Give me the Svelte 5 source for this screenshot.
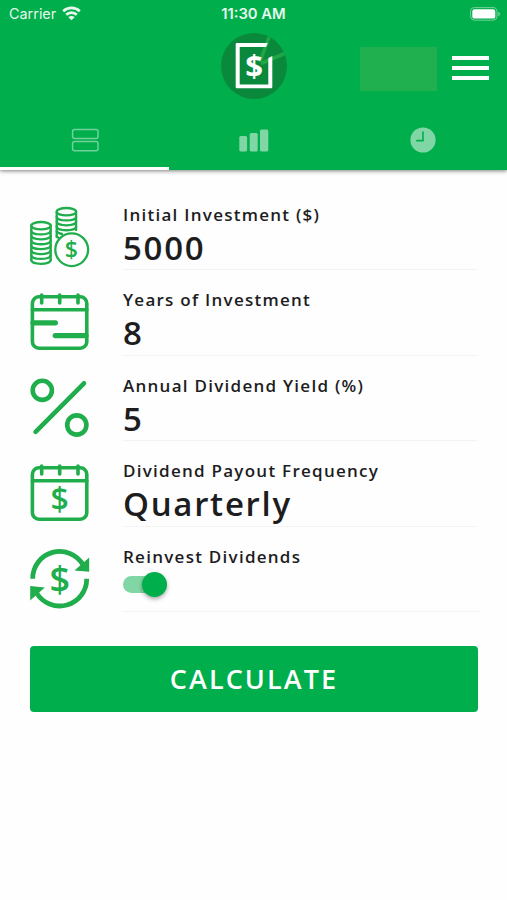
<script lang="ts">
	type Field = {
		icon: 'coins' | 'schedule' | 'percent' | 'payout' | 'reinvest';
		label: string;
		value?: string;
	};

	const fields: Field[] = [
		{ icon: 'coins', label: 'Initial Investment ($)', value: '5000' },
		{ icon: 'schedule', label: 'Years of Investment', value: '8' },
		{ icon: 'percent', label: 'Annual Dividend Yield (%)', value: '5' },
		{ icon: 'payout', label: 'Dividend Payout Frequency', value: 'Quarterly' },
		{ icon: 'reinvest', label: 'Reinvest Dividends' }
	];

	const tabs = ['form', 'chart', 'history'];

	let activeTab = $state('form');
	let reinvest = $state(true);
</script>

{#snippet calendar()}
	<rect x="2.4" y="4.8" width="54.4" height="51.4" rx="6.5" />
	<path d="M2.4 17.8H56.8M11.7 3v8M29.7 3v8M48 3v8" />
{/snippet}

<div class="screen">
	<header>
		<div class="status">
			<div class="carrier">
				<span>Carrier</span>
				<svg viewBox="0 0 19 15" width="19" height="15" aria-hidden="true">
					<g fill="none" stroke="#fff" stroke-width="2.7">
						<path d="M1.2 5.3a12 12 0 0 1 16.6 0" />
						<path d="M4.2 8.8a7.6 7.6 0 0 1 10.6 0" />
					</g>
					<path d="M9.5 14.3L6.3 11.2a4.6 4.6 0 0 1 6.4 0z" fill="#fff" />
				</svg>
			</div>
			<span class="time">11:30 AM</span>
			<svg class="battery" viewBox="0 0 31 14" width="31" height="14" aria-hidden="true">
				<rect x="0.6" y="0.6" width="26.4" height="12.6" rx="4" fill="none" stroke="#fff" stroke-opacity="0.45" />
				<rect x="2.3" y="2.2" width="23" height="9.4" rx="2.2" fill="#fff" />
				<path d="M28.4 4.8c2 .8 2 3.6 0 4.4z" fill="#fff" fill-opacity="0.55" />
			</svg>
		</div>

		<div class="brand">
			<svg class="logo" viewBox="0 0 66 66" width="66" height="66" aria-hidden="true">
				<circle cx="33" cy="33" r="33" fill="#0a893c" />
				<path d="M39 29L48 4M40 30.5L63.5 20.5" stroke="#20a646" stroke-width="3.6" fill="none" />
				<path
					d="M46.8 10H15.7a1 1 0 0 0-1 1V54.3a1 1 0 0 0 1 1H50.3a1 1 0 0 0 1-1V23L47.3 25V51.4H18.7V14H45z"
					fill="#fff"
				/>
				<text x="33" y="43.8" font-size="31" font-weight="700" text-anchor="middle" fill="#fff">$</text>
			</svg>
			<div class="actions">
				<div class="slot"></div>
				<button class="menu" aria-label="Menu">
					<i></i>
					<i></i>
					<i></i>
				</button>
			</div>
		</div>

		<nav>
			{#each tabs as tab (tab)}
				<button class="tab" class:active={activeTab === tab} onclick={() => (activeTab = tab)} aria-label={tab}>
					<svg viewBox="0 0 30 26" width="30" height="26" aria-hidden="true">
						{#if tab === 'form'}
							<g fill="none" stroke="#70d29a" stroke-width="1.5">
								<rect x="2.6" y="2.4" width="25.4" height="9.2" rx="2" />
								<rect x="2.6" y="14.4" width="25.4" height="9.4" rx="2" />
							</g>
						{:else if tab === 'chart'}
							<g fill="#80d7a5">
								<rect x="0.3" y="9" width="7.8" height="15.5" rx="1.6" />
								<rect x="10.7" y="6" width="8" height="18.5" rx="1.6" />
								<rect x="21" y="2.5" width="8.3" height="22" rx="1.6" />
							</g>
						{:else}
							<circle cx="15" cy="13" r="12.6" fill="#80d7a5" />
							<path d="M15 4.6V13.6H8.2" fill="none" stroke="#00ae4b" stroke-width="1.6" />
						{/if}
					</svg>
				</button>
			{/each}
		</nav>
	</header>

	<main>
		{#each fields as field (field.icon)}
			<div class="row">
				<svg class="icon" viewBox="0 0 60 60" width="60" height="60" aria-hidden="true">
					{#if field.icon === 'coins'}
						<g stroke-width="2.3">
							<ellipse cx="11" cy="18.7" rx="9.7" ry="3.7" />
							<path d="M1.3 18.7V53.2M20.7 18.7V53.2" />
							{#each [23.7, 28.6, 33.5, 38.4, 43.3, 48.2, 53.1] as y}
								<path d="M1.3 {y}c0 5 19.4 5 19.4 0" />
							{/each}
							<ellipse cx="36.4" cy="4.7" rx="9.7" ry="3.7" />
							<path d="M26.7 4.7V30M46.1 4.7V23" />
							<path d="M26.7 9.7c0 5 19.4 5 19.4 0M26.7 14.6c0 5 19.4 5 19.4 0M26.7 19.5c0 5 19.4 5 19.4 0" />
							<path d="M26.7 24.4c1 1.6 3 2.3 5.4 2.6M26.7 29.5l2 1.4" />
							<circle cx="41.7" cy="42.7" r="16.4" />
						</g>
						<text x="41.4" y="50.6" font-size="23" font-weight="600">$</text>
					{:else if field.icon === 'schedule'}
						<g stroke-width="3.6">
							{@render calendar()}
							<path d="M3 30.8H25.4M25.2 43.6H56" stroke-width="5.2" />
						</g>
					{:else if field.icon === 'percent'}
						<g stroke-width="4.6">
							<circle cx="12.3" cy="12.3" r="9.6" />
							<circle cx="46.8" cy="47" r="9.6" />
							<path d="M5.6 53.8L54 5.3" />
						</g>
					{:else if field.icon === 'payout'}
						<g stroke-width="3.6">
							{@render calendar()}
						</g>
						<text x="29.7" y="48.4" font-size="32" font-weight="600">$</text>
					{:else}
						<g stroke-width="4.8" class="butt">
							<path d="M2.7 29.7A27 27 0 0 1 53 15.8" />
							<path d="M56.7 29.7A27 27 0 0 1 6.4 43.6" />
						</g>
						<path class="head" d="M59.2 8.6V22.8L44.5 21.4zM0.2 51.5V37L14.8 38.4z" />
						<text x="29.7" y="42.6" font-size="36" font-weight="600">$</text>
					{/if}
				</svg>
				<div class="field" class:wide={!field.value}>
					<span class="label">{field.label}</span>
					{#if field.value}
						<span class="value">{field.value}</span>
					{:else}
						<button
							class="switch"
							class:on={reinvest}
							role="switch"
							aria-checked={reinvest}
							aria-label={field.label}
							onclick={() => (reinvest = !reinvest)}
						>
							<i></i>
						</button>
					{/if}
				</div>
			</div>
		{/each}

		<button class="calculate">CALCULATE</button>
	</main>
</div>

<style>
	:global(body) {
		background: #fefefe;
	}

	.screen {
		width: 507px;
		height: 900px;
		overflow: hidden;
		background: #fefefe;
		color: #1d1d1f;
		font-family: 'Open Sans', 'Noto Sans', sans-serif;
	}

	button {
		padding: 0;
		border: 0;
		background: none;
		font: inherit;
		cursor: pointer;
	}

	header {
		display: flex;
		flex-direction: column;
		height: 169.5px;
		background: #00ae4b;
		box-shadow: 0 1px 4px rgba(0, 0, 0, 0.5);
	}

	.status {
		display: grid;
		grid-template-columns: 1fr auto 1fr;
		align-items: center;
		height: 27px;
		padding: 0 6px 0 9px;
		color: #fff;
		font-family: Inter, Roboto, sans-serif;
		font-size: 14.4px;
	}
	.carrier {
		display: flex;
		align-items: center;
		gap: 6px;
		opacity: 0.9;
	}
	.time {
		margin-right: 3px;
		font-size: 14.8px;
		font-weight: 600;
		opacity: 0.9;
	}
	.battery {
		justify-self: end;
	}

	.brand {
		display: grid;
		grid-template-columns: 1fr 66px 1fr;
		align-items: center;
		height: 84px;
		padding: 0 18px 0 19px;
	}
	.logo {
		grid-column: 2;
		margin-top: -6px;
	}
	.actions {
		display: flex;
		align-items: center;
		justify-content: flex-end;
		gap: 15px;
	}
	.slot {
		width: 77px;
		height: 44px;
		background: #20b04f;
	}
	.menu {
		display: flex;
		flex-direction: column;
		gap: 6px;
		width: 37px;
		margin-top: -2px;
	}
	.menu i {
		height: 4px;
		background: #fff;
	}

	nav {
		display: grid;
		grid-template-columns: repeat(3, 1fr);
		flex: 1;
	}
	.tab {
		display: flex;
		align-items: center;
		justify-content: center;
		padding-top: 3px;
		border-bottom: 3px solid transparent;
	}
	.tab.active {
		border-bottom-color: #fff;
	}

	main {
		padding: 15px 30px 0;
	}

	.row {
		display: flex;
		gap: 33px;
		height: 85.5px;
	}
	.icon {
		flex: none;
		margin-top: 22px;
		overflow: visible;
		fill: none;
		stroke: #20ad4b;
		stroke-linecap: round;
		stroke-linejoin: round;
	}
	.icon text {
		fill: #20ad4b;
		stroke: none;
		text-anchor: middle;
	}
	.butt {
		stroke-linecap: butt;
	}
	.head {
		fill: #20ad4b;
		stroke: none;
	}

	.field {
		display: flex;
		flex-direction: column;
		align-items: flex-start;
		flex: 1;
		padding-top: 18px;
		border-bottom: 1px solid #f3f3f3;
	}
	.field.wide {
		margin-right: -3px;
	}
	.label {
		font-size: 17px;
		font-weight: 600;
		line-height: 23px;
		letter-spacing: 1.26px;
		white-space: nowrap;
	}
	.value {
		font-size: 33px;
		font-weight: 600;
		line-height: 44px;
		letter-spacing: 1.7px;
	}

	.switch {
		display: flex;
		align-items: center;
		width: 44px;
		height: 17px;
		margin-top: 8px;
		border-radius: 9px;
		background: linear-gradient(90deg, #c4c4c4 0 36px, transparent 36px);
	}
	.switch i {
		width: 25px;
		height: 25px;
		border-radius: 50%;
		background: #f4f4f4;
		box-shadow: 0 2px 4px rgba(0, 0, 0, 0.35);
	}
	.switch.on {
		justify-content: flex-end;
		background: linear-gradient(90deg, #80d7a5 0 36px, transparent 36px);
	}
	.switch.on i {
		background: #00ae4b;
	}

	.calculate {
		width: 448px;
		height: 66px;
		margin-top: 34px;
		padding-bottom: 2px;
		border-radius: 4px;
		background: #00ae4b;
		color: #fff;
		font-size: 27px;
		font-weight: 600;
		letter-spacing: 2.1px;
	}
</style>
